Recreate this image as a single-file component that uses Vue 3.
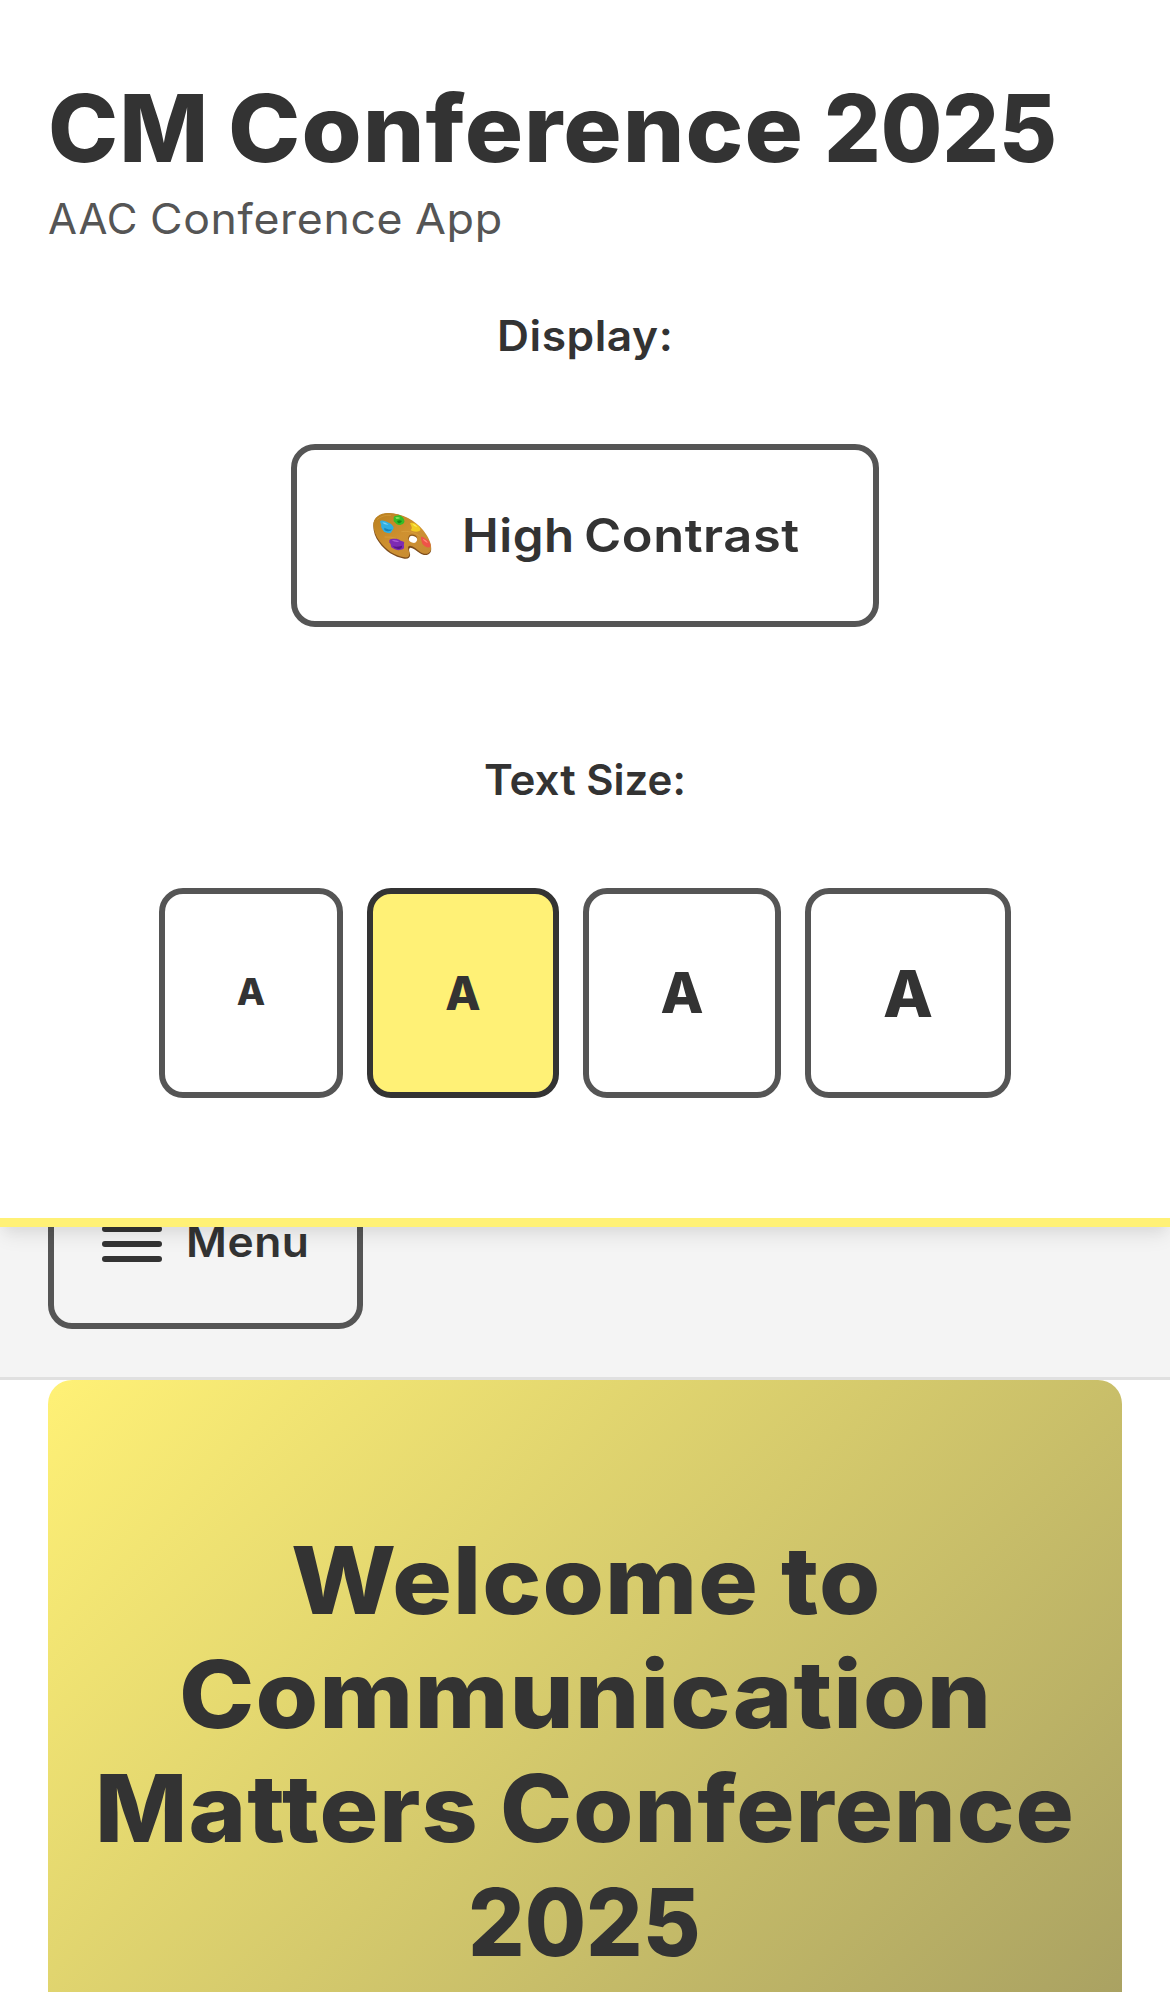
<script setup>
import { ref } from 'vue'

// Each word: glyph stretch, tracking, drawn width, and the space before it.
const title = [
  { text: 'CM', stretch: 1.015, track: 1, width: 161.3, gap: 0 },
  { text: 'Conference', stretch: 1.046, track: 1, width: 576, gap: 19.2 },
  { text: '2025', stretch: 0.957, track: 0, width: 233, gap: 19.5 }
]
const subtitle = [
  { text: 'AAC', stretch: 1, track: 0.8, width: 90.2, gap: 0 },
  { text: 'Conference', stretch: 1.062, track: 0.6, width: 253.2, gap: 11.6 },
  { text: 'App', stretch: 1.068, track: 0.6, width: 88, gap: 12.2 }
]
const displayLabel = [{ text: 'Display:', stretch: 1.055, track: 0.5, width: 176.3, gap: 0 }]
const contrastLabel = [
  { text: 'High', stretch: 1.07, track: 0.5, width: 112.7, gap: 0 },
  { text: 'Contrast', stretch: 1.1, track: 0.5, width: 215.6, gap: 9.6 }
]
const sizeLabel = [
  { text: 'Text', stretch: 1.045, track: 0, width: 91.8, gap: 0 },
  { text: 'Size:', stretch: 1, track: 0, width: 99.5, gap: 10.2 }
]
const menuLabel = [{ text: 'Menu', stretch: 1.056, track: 0.5, width: 123.5, gap: 0 }]
const heroLines = [
  [
    { text: 'Welcome', stretch: 1.068, track: 1, width: 467.9, gap: 0 },
    { text: 'to', stretch: 1.064, track: 1, width: 98.2, gap: 21.9 }
  ],
  [{ text: 'Communication', stretch: 1.09, track: 1, width: 812.8, gap: 0 }],
  [
    { text: 'Matters', stretch: 1.054, track: 1, width: 383.9, gap: 0 },
    { text: 'Conference', stretch: 1.044, track: 1, width: 574.4, gap: 20.9 }
  ],
  [{ text: '2025', stretch: 0.955, track: 0, width: 235, gap: 0 }]
]
const sizes = [
  { font: 37, width: 184 },
  { font: 46, width: 192 },
  { font: 56, width: 198 },
  { font: 65, width: 206 }
]
const active = ref(1)
const wordStyle = (w) => ({
  width: w.width + 'px',
  marginLeft: w.gap + 'px',
  letterSpacing: w.track + 'px',
  transform: `scaleX(${w.stretch})`
})
</script>

<template>
  <div class="page">
    <header class="header">
      <h1 class="title words">
        <span v-for="w in title" :key="w.text" class="word" :style="wordStyle(w)">{{ w.text }}</span>
      </h1>
      <p class="subtitle words">
        <span v-for="w in subtitle" :key="w.text" class="word" :style="wordStyle(w)">{{ w.text }}</span>
      </p>

      <section class="group">
        <div class="label words">
          <span v-for="w in displayLabel" :key="w.text" class="word" :style="wordStyle(w)">{{ w.text }}</span>
        </div>
        <button class="contrast" type="button">
          <svg class="palette" viewBox="70 65 177 144" aria-hidden="true">
            <defs>
              <linearGradient id="wood" x1="0" y1="0" x2="1" y2="1">
                <stop offset="0" stop-color="#b9801f" />
                <stop offset="0.5" stop-color="#cf9130" />
                <stop offset="1" stop-color="#c48a35" />
              </linearGradient>
            </defs>
            <path fill="#7d4d1c" d="M71 106C71 84 90 69 118 69C157 69 196 94 219 122C237 144 249 171 243 185C238 196 222 197 211 189C200 181 192 173 183 172C175 173 179 183 181 191C183 201 176 207 164 205C135 201 106 182 88 156C77 141 71 124 71 106Z" />
            <path fill="url(#wood)" d="M71 102C72 81 91 67 118 68C157 69 197 91 220 119C237 140 249 166 243 181C238 192 223 193 212 185C201 176 192 167 181 166C171 167 176 178 179 186C181 197 175 203 164 201C135 197 108 178 90 153C78 137 71 120 71 102Z" />
            <path fill="none" stroke="#e3ad4b" stroke-width="2" opacity="0.6" d="M82 88Q98 73 124 75M155 124Q184 119 210 137M105 140Q123 139 139 144" />
            <ellipse cx="189" cy="144" rx="13.5" ry="11" transform="rotate(18 189 144)" fill="#8b581d" />
            <ellipse cx="190" cy="147" rx="12.5" ry="10" transform="rotate(18 190 147)" fill="#fff" />
            <path fill="#31aee0" d="M91 94C96 87 105 93 113 95C119 99 124 98 131 109C134 116 127 119 125 126C119 132 110 126 104 125C99 118 92 110 95 104Z" />
            <path fill="#1683bc" d="M104 112C112 116 119 119 127 117C124 124 111 125 104 118Z" />
            <path fill="#79d2f2" d="M98 96Q107 96 117 103Q109 103 103 101Z" />
            <path fill="#35bd27" d="M132 82C133 75 143 77 149 74C158 78 163 85 164 91C166 98 158 103 149 104C141 105 137 96 132 93Z" />
            <path fill="#148c17" d="M142 92Q150 88 157 92Q154 100 145 98Z" />
            <path fill="#83df5c" d="M137 81Q145 78 152 83Q145 87 140 86Z" />
            <path fill="#f1cc22" d="M181 99C187 95 197 99 203 105C211 111 216 119 209 122C201 126 189 124 183 119C190 114 185 108 181 99Z" />
            <path fill="#ffeb58" d="M188 101Q197 101 203 111Q194 110 188 101Z" />
            <path fill="#ef5348" d="M214 140C218 137 226 145 234 149C242 155 244 166 241 171C233 173 224 168 218 160C216 152 213 148 214 140Z" />
            <path fill="#ff8a79" d="M219 145Q230 148 235 157Q225 156 219 145Z" />
            <path fill="#7d2bb3" d="M119 149C123 144 128 146 135 145C142 145 148 146 153 151C160 153 166 154 163 160C161 165 167 173 159 177C149 181 138 180 130 174C121 170 126 161 119 157Z" />
            <path fill="#561684" d="M129 167Q140 172 157 166Q159 174 146 176Q134 174 129 167Z" />
            <path fill="#a95bd4" d="M126 150Q138 147 149 154Q137 158 126 150Z" />
          </svg>
          <span class="contrast-text words">
            <span v-for="w in contrastLabel" :key="w.text" class="word" :style="wordStyle(w)">{{ w.text }}</span>
          </span>
        </button>
      </section>

      <section class="group size-group">
        <div class="label words">
          <span v-for="w in sizeLabel" :key="w.text" class="word" :style="wordStyle(w)">{{ w.text }}</span>
        </div>
        <div class="sizes">
          <button
            v-for="(s, i) in sizes"
            :key="i"
            type="button"
            class="size"
            :class="{ active: i === active }"
            :style="{ width: s.width + 'px', fontSize: s.font + 'px' }"
            @click="active = i"
          >A</button>
        </div>
      </section>
    </header>

    <nav class="nav">
      <button class="menu" type="button">
        <span class="bars"><i></i><i></i><i></i></span>
        <span class="menu-text words">
          <span v-for="w in menuLabel" :key="w.text" class="word" :style="wordStyle(w)">{{ w.text }}</span>
        </span>
      </button>
    </nav>

    <main class="hero">
      <h2 class="hero-title">
        <span v-for="(line, i) in heroLines" :key="i" class="hero-line words">
          <span v-for="w in line" :key="w.text" class="word" :style="wordStyle(w)">{{ w.text }}</span>
        </span>
      </h2>
    </main>
  </div>
</template>

<style>
body {
  margin: 0;
  background: #fff;
}
</style>

<style scoped>
.page {
  width: 1170px;
  height: 1992px;
  overflow: hidden;
  box-sizing: border-box;
  background: #fff;
  color: #333;
  font-family: "Inter", "Liberation Sans", sans-serif;
}
.page * {
  box-sizing: border-box;
}
button {
  margin: 0;
  padding: 0;
  font-family: inherit;
  color: inherit;
  background: transparent;
  border: 6px solid #555;
  border-radius: 24px;
}
.words {
  display: flex;
  white-space: nowrap;
}
.word {
  flex: none;
  text-align: left;
  transform-origin: left center;
}
.header {
  position: relative;
  z-index: 1;
  height: 1227px;
  padding: 71px 48px 0;
  background: #fff;
  border-bottom: 9px solid #fff176;
  box-shadow: 0 12px 18px -3px rgba(0, 0, 0, 0.08), 0 6px 12px -3px rgba(0, 0, 0, 0.04);
}
.title {
  margin: 0;
  font-size: 93px;
  font-weight: 800;
  line-height: 114px;
}
.subtitle {
  margin: 3px 0 0;
  font-size: 42px;
  line-height: 62px;
  color: #555;
}
.group {
  display: flex;
  flex-direction: column;
  align-items: center;
  margin-top: 55px;
}
.label {
  font-size: 42px;
  font-weight: 600;
  line-height: 62px;
}
.contrast {
  display: flex;
  align-items: center;
  width: 588px;
  height: 183px;
  margin-top: 77px;
  padding-left: 76px;
  font-size: 46px;
  font-weight: 600;
}
.contrast-text {
  margin-top: -2px;
}
.palette {
  width: 59px;
  height: 48px;
  margin-right: 30px;
}
.size-group {
  margin-top: 122px;
}
.sizes {
  display: flex;
  gap: 24px;
  margin-top: 77px;
}
.size {
  height: 210px;
  font-weight: 800;
}
.size:first-child {
  padding-bottom: 3px;
}
.size.active {
  background: #fff176;
  border-color: #333;
}
.nav {
  height: 269px;
  margin-top: -116px;
  padding: 48px;
  background: #f4f4f4;
  border-bottom: 3px solid #e0e0e0;
}
.menu {
  display: flex;
  align-items: center;
  width: 315px;
  height: 170px;
  padding-left: 48px;
  font-size: 42px;
  font-weight: 600;
}
.bars {
  display: flex;
  flex-direction: column;
  gap: 9px;
  width: 60px;
  margin-right: 24px;
}
.bars i {
  height: 6px;
  border-radius: 3px;
  background: #333;
}
.menu-text {
  margin-top: -5px;
}
.hero {
  height: 612px;
  margin: 0 48px;
  padding-top: 143px;
  border-radius: 24px 24px 0 0;
  background: linear-gradient(135deg, #fff176, #aaa262);
}
.hero-title {
  margin: 0;
  font-size: 93px;
  font-weight: 800;
  line-height: 114px;
}
.hero-line {
  justify-content: center;
}
</style>
